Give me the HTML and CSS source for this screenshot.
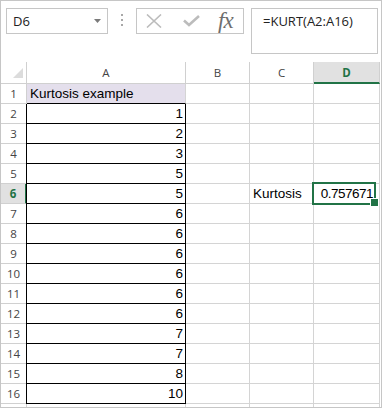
FILE: index.html
```html
<!DOCTYPE html>
<html lang="en">
<head>
    <meta charset="UTF-8">
    <title>KURT</title>
    <link rel="stylesheet" href="styles.css">
</head>
<body>
<div class="window">

    <div class="formula-bar">
        <div class="name-box">
            <span>D6</span>
            <svg class="drop" width="7" height="4" viewBox="0 0 7 4"><path d="M0 0h7L3.5 4z" fill="#7a7a7a"/></svg>
        </div>
        <div class="grip"><i></i><i></i><i></i></div>
        <div class="fx-buttons">
            <svg class="cancel" width="16" height="14" viewBox="0 0 16 14"><path d="M1 0.5L15 13.5M15 0.5L1 13.5" stroke="#bcbcbc" stroke-width="1.6" fill="none"/></svg>
            <svg class="enter" width="17" height="12" viewBox="0 0 17 12"><path d="M1 5.5L6 10L16 1" stroke="#bcbcbc" stroke-width="2.6" fill="none"/></svg>
            <span class="fx">fx</span>
        </div>
        <div class="formula-input">=KURT(A2:A16)</div>
    </div>

    <div class="sheet">
        <div class="hd corner"><svg width="10" height="10" viewBox="0 0 10 10"><path d="M10 0V10H0z" fill="#dcdcdc"/></svg></div>
        <div class="hd col">A</div>
        <div class="hd col">B</div>
        <div class="hd col">C</div>
        <div class="hd col active">D</div>

        <div class="hd row">1</div><div class="c title">Kurtosis example</div><div class="c"></div><div class="c"></div><div class="c"></div>
        <div class="hd row">2</div><div class="c num data">1</div><div class="c"></div><div class="c"></div><div class="c"></div>
        <div class="hd row">3</div><div class="c num data">2</div><div class="c"></div><div class="c"></div><div class="c"></div>
        <div class="hd row">4</div><div class="c num data">3</div><div class="c"></div><div class="c"></div><div class="c"></div>
        <div class="hd row">5</div><div class="c num data">5</div><div class="c"></div><div class="c"></div><div class="c"></div>
        <div class="hd row active">6</div><div class="c num data">5</div><div class="c"></div><div class="c label">Kurtosis</div><div class="c num selected">0.757671</div>
        <div class="hd row">7</div><div class="c num data">6</div><div class="c"></div><div class="c"></div><div class="c"></div>
        <div class="hd row">8</div><div class="c num data">6</div><div class="c"></div><div class="c"></div><div class="c"></div>
        <div class="hd row">9</div><div class="c num data">6</div><div class="c"></div><div class="c"></div><div class="c"></div>
        <div class="hd row">10</div><div class="c num data">6</div><div class="c"></div><div class="c"></div><div class="c"></div>
        <div class="hd row">11</div><div class="c num data">6</div><div class="c"></div><div class="c"></div><div class="c"></div>
        <div class="hd row">12</div><div class="c num data">6</div><div class="c"></div><div class="c"></div><div class="c"></div>
        <div class="hd row">13</div><div class="c num data">7</div><div class="c"></div><div class="c"></div><div class="c"></div>
        <div class="hd row">14</div><div class="c num data">7</div><div class="c"></div><div class="c"></div><div class="c"></div>
        <div class="hd row">15</div><div class="c num data">8</div><div class="c"></div><div class="c"></div><div class="c"></div>
        <div class="hd row">16</div><div class="c num data">10</div><div class="c"></div><div class="c"></div><div class="c"></div>
        <div class="hd row"></div><div class="c"></div><div class="c"></div><div class="c"></div><div class="c"></div>
    </div>

</div>
</body>
</html>
```

FILE: styles.css
```css
* {
    box-sizing: border-box;
}
body {
    margin: 0;
    background: #fff;
}
.window {
    width: 382px;
    height: 408px;
    border: 1px solid #c6c6c6;
    overflow: hidden;
    font-family: "Open Sans", sans-serif;
}

/* formula bar */
.formula-bar {
    display: flex;
    align-items: flex-start;
    height: 61px;
    padding: 7px 0 0 5px;
}
.name-box {
    width: 102px;
    height: 26px;
    border: 1px solid #c6c6c6;
    display: flex;
    align-items: center;
    justify-content: space-between;
    padding: 0 6px 0 6px;
    font-size: 13px;
    line-height: 18px;
    color: #222;
}
.grip {
    width: 28px;
    display: flex;
    flex-direction: column;
    align-items: center;
    gap: 3px;
    padding-top: 6px;
}
.grip i {
    width: 2px;
    height: 2px;
    background: #a8a8a8;
}
.fx-buttons {
    width: 108px;
    height: 26px;
    border: 1px solid #c6c6c6;
    display: flex;
    align-items: center;
    padding-left: 9px;
}
.enter {
    margin-left: 21px;
}
.fx {
    margin-left: 18px;
    font-family: "Liberation Serif", serif;
    font-style: italic;
    font-size: 23px;
    line-height: 20px;
    color: #6e6e6e;
    letter-spacing: -1px;
}
.formula-input {
    width: 127px;
    height: 46px;
    margin-left: 7px;
    border: 1px solid #c6c6c6;
    padding: 3px 0 0 11px;
    font-size: 13px;
    line-height: 18px;
    color: #222;
}

/* grid */
.sheet {
    display: grid;
    grid-template-columns: 26px 159px 64px 64px 66px;
    grid-template-rows: 22px;
    grid-auto-rows: 20px;
}
.hd {
    font-size: 11.5px;
    color: #444;
    border-right: 1px solid #d0d0d0;
    border-bottom: 1px solid #d0d0d0;
    display: flex;
    align-items: center;
    justify-content: center;
}
.corner {
    align-items: flex-end;
    justify-content: flex-end;
    padding: 0 3px 5px 0;
}
.col.active {
    background: #e1e1e1;
    color: #217346;
    font-weight: bold;
    border-bottom: 2px solid #217346;
}
.row.active {
    background: #e1e1e1;
    color: #217346;
    font-weight: bold;
    border-right: 2px solid #217346;
}
.c {
    font-family: "Liberation Sans", Arial, sans-serif;
    font-size: 13.5px;
    line-height: 19px;
    color: #000;
    border-right: 1px solid #d4d4d4;
    border-bottom: 1px solid #d4d4d4;
    padding: 0 3px;
    white-space: nowrap;
}
.num {
    text-align: right;
    padding-right: 2px;
}
.title {
    background: #e4dfec;
    border-bottom-color: #000;
}
.data {
    border-right-color: #000;
    border-bottom-color: #000;
    box-shadow: -1px 0 #000;
}
.selected {
    position: relative;
    padding-right: 6px;
    letter-spacing: -0.5px;
}
.selected::after {
    content: "";
    position: absolute;
    top: -2px;
    left: -2px;
    right: 3px;
    bottom: -2px;
    border: 2px solid #217346;
}
.selected::before {
    content: "";
    position: absolute;
    right: 0;
    bottom: -4px;
    width: 7px;
    height: 7px;
    background: #217346;
    border: 1px solid #fff;
    z-index: 1;
}
```
